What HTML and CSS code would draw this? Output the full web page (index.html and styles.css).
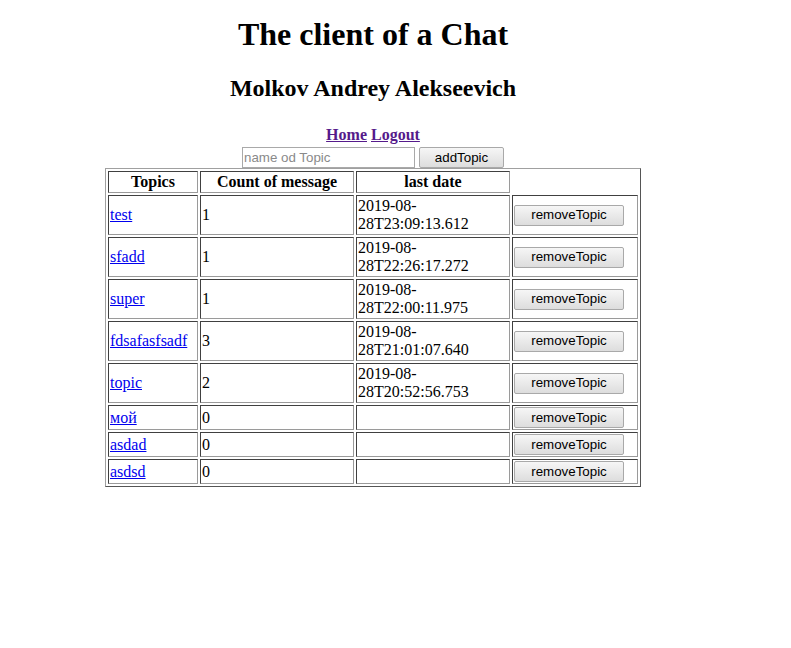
FILE: index.html
```html
<!DOCTYPE html>
<html>
<head>
<meta charset="utf-8">
<link rel="stylesheet" href="styles.css">
</head>
<body>
<div class="page">
  <h1 class="title">The client of a Chat</h1>
  <h2 class="user">Molkov Andrey Alekseevich</h2>
  <div class="nav"><a href="#" class="visited">Home</a> <a href="#" class="visited">Logout</a></div>
  <form class="add-form">
    <input class="topic-input" type="text" placeholder="name od Topic"><button type="button" class="btn btn-add">addTopic</button>
  </form>
  <table class="topics">
    <tr>
      <th class="c1">Topics</th>
      <th class="c2">Count of message</th>
      <th class="c3">last date</th>
    </tr>
    <tr class="tall">
      <td class="c1"><a href="#">test</a></td>
      <td class="c2">1</td>
      <td class="c3">2019-08-<wbr>28T23:09:13.612</td>
      <td class="c4"><button type="button" class="btn btn-remove">removeTopic</button></td>
    </tr>
    <tr class="tall">
      <td class="c1"><a href="#">sfadd</a></td>
      <td class="c2">1</td>
      <td class="c3">2019-08-<wbr>28T22:26:17.272</td>
      <td class="c4"><button type="button" class="btn btn-remove">removeTopic</button></td>
    </tr>
    <tr class="tall">
      <td class="c1"><a href="#">super</a></td>
      <td class="c2">1</td>
      <td class="c3">2019-08-<wbr>28T22:00:11.975</td>
      <td class="c4"><button type="button" class="btn btn-remove">removeTopic</button></td>
    </tr>
    <tr class="tall">
      <td class="c1"><a href="#">fdsafasfsadf</a></td>
      <td class="c2">3</td>
      <td class="c3">2019-08-<wbr>28T21:01:07.640</td>
      <td class="c4"><button type="button" class="btn btn-remove">removeTopic</button></td>
    </tr>
    <tr class="tall">
      <td class="c1"><a href="#">topic</a></td>
      <td class="c2">2</td>
      <td class="c3">2019-08-<wbr>28T20:52:56.753</td>
      <td class="c4"><button type="button" class="btn btn-remove">removeTopic</button></td>
    </tr>
    <tr>
      <td class="c1"><a href="#">мой</a></td>
      <td class="c2">0</td>
      <td class="c3"></td>
      <td class="c4"><button type="button" class="btn btn-remove">removeTopic</button></td>
    </tr>
    <tr>
      <td class="c1"><a href="#">asdad</a></td>
      <td class="c2">0</td>
      <td class="c3"></td>
      <td class="c4"><button type="button" class="btn btn-remove">removeTopic</button></td>
    </tr>
    <tr>
      <td class="c1"><a href="#">asdsd</a></td>
      <td class="c2">0</td>
      <td class="c3"></td>
      <td class="c4"><button type="button" class="btn btn-remove">removeTopic</button></td>
    </tr>
  </table>
</div>
</body>
</html>
```

FILE: styles.css
```css
html, body {
  margin: 0;
  padding: 0;
  background: #ffffff;
}
body {
  font-family: "Liberation Serif", "Times New Roman", serif;
  font-size: 16px;
  color: #000000;
}
.page {
  width: 730px;
  margin: 0 0 0 8px;
  text-align: center;
  padding-top: 16px;
}
.title {
  font-size: 32px;
  font-weight: bold;
  margin: 0;
  line-height: 37px;
}
.user {
  font-size: 24px;
  font-weight: bold;
  margin: 21px 0 0 0;
  line-height: 28px;
}
.nav {
  margin-top: 24px;
  font-weight: bold;
  line-height: 18px;
}
.nav a {
  color: #551a8b;
}
.add-form {
  margin: 3px 0 0 0;
  display: flex;
  justify-content: center;
  align-items: flex-start;
  gap: 4px;
}
.topic-input {
  width: 173px;
  height: 21px;
  box-sizing: border-box;
  border: 1px solid #a9a9a9;
  padding: 1px 1px;
  font-family: "Liberation Sans", Arial, sans-serif;
  font-size: 13.33px;
  margin: 0;
}
.topic-input::placeholder {
  color: #8a8a8a;
}
.btn {
  font-family: "Liberation Sans", Arial, sans-serif;
  font-size: 13.33px;
  color: #000;
  background: linear-gradient(#f6f6f6, #dddddd);
  border: 1px solid #a9a9a9;
  border-radius: 2px;
  box-sizing: border-box;
  margin: 0;
  padding: 0;
  line-height: 16px;
}
.btn-add {
  width: 85px;
  height: 21px;
}
.btn-remove {
  display: block;
  width: 110px;
  height: 21px;
}
.topics {
  margin: 0 auto;
  border: 1px solid;
  border-color: #a0a0a0 #555555 #555555 #a0a0a0;
  border-spacing: 2px;
  text-align: left;
  line-height: 18px;
}
.topics th,
.topics td {
  border: 1px solid;
  border-color: #404040 #9a9a9a #9a9a9a #404040;
  padding: 1px;
  vertical-align: middle;
}
.topics th {
  text-align: center;
  font-weight: bold;
}
.topics a {
  color: #0000ee;
}
.c1 { width: 86px; }
.c2 { width: 150px; }
.c3 { width: 150px; }
.c4 { width: 122px; }
```
